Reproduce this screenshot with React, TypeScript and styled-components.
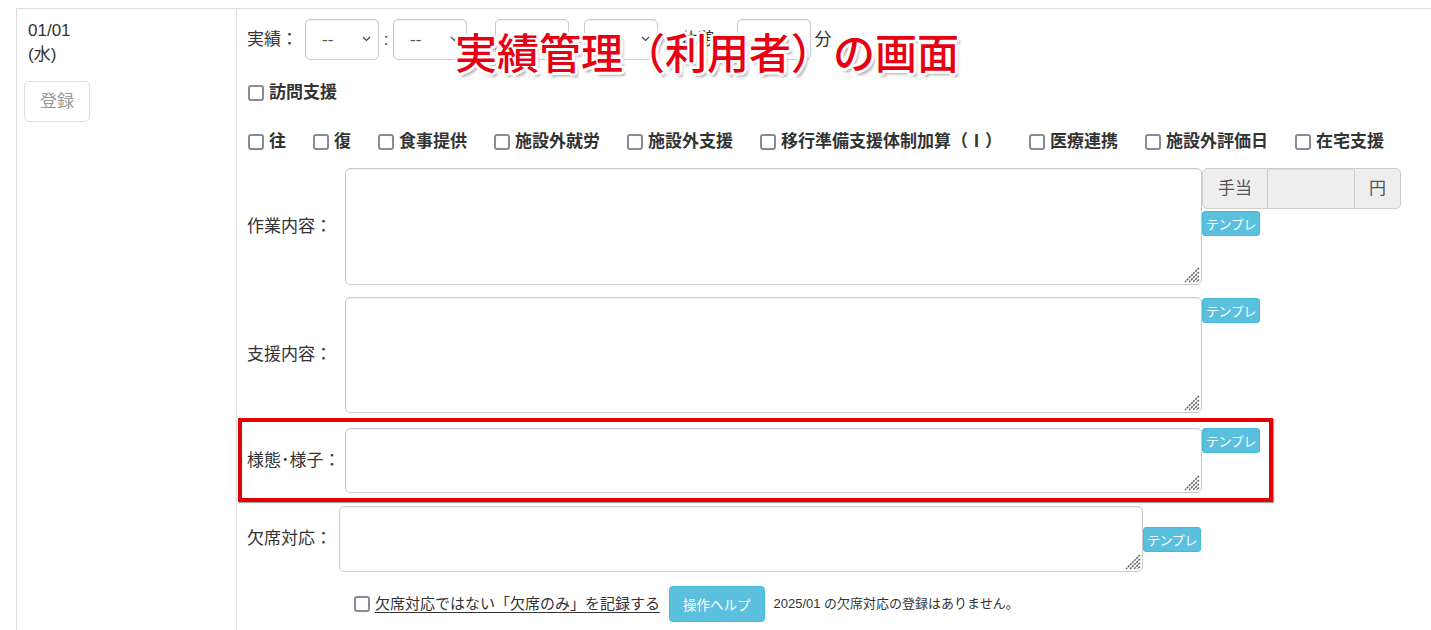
import React from "react";
import styled, { createGlobalStyle } from "styled-components";

const GlobalStyle = createGlobalStyle`
  html, body {
    margin: 0;
    padding: 0;
    overflow: hidden;
    background: #fff;
  }
  body {
    font-family: "Liberation Sans", "Noto Sans CJK JP", sans-serif;
    font-size: 17px;
    line-height: 24px;
    color: #333;
  }
`;

const Page = styled.div`
  position: relative;
  padding: 8px 0 0 16px;
  height: 640px;
`;

const Table = styled.div`
  display: flex;
  width: 1440px;
  min-height: 660px;
  border-top: 1px solid #ddd;
  border-left: 1px solid #ddd;
`;

const DateCell = styled.div`
  box-sizing: border-box;
  width: 220px;
  flex: 0 0 auto;
  padding: 10px 10px 10px 7px;
  border-right: 1px solid #ddd;
`;

const DateText = styled.div`
  padding-left: 4px;
`;

const RegisterButton = styled.button`
  display: block;
  margin-top: 14px;
  width: 66px;
  height: 41px;
  padding: 0;
  border: 1px solid #ddd;
  border-radius: 5px;
  background: #fff;
  color: #999;
  font: inherit;
`;

const FormCell = styled.div`
  flex: 1;
  padding: 10px;
`;

const TimeRow = styled.div`
  display: flex;
  align-items: center;
  height: 41px;
`;

const SelectWrap = styled.span`
  position: relative;
  display: inline-block;
  flex: 0 0 auto;

  svg {
    position: absolute;
    right: 8px;
    top: 17px;
    pointer-events: none;
  }
`;

const Select = styled.select`
  box-sizing: border-box;
  display: block;
  width: 74px;
  height: 41px;
  padding: 0 6px 0 16px;
  border: 1px solid #ccc;
  border-radius: 5px;
  background: #fff;
  color: #555;
  font: inherit;
  appearance: none;
  box-shadow: inset 0 1px 1px rgba(0, 0, 0, 0.075);
`;

const Sep = styled.span<{ w: number; align?: "left" | "center" }>`
  width: ${({ w }) => w}px;
  text-align: ${({ align }) => align ?? "center"};
  flex: 0 0 auto;
`;

const CheckRow = styled.div<{ top: number }>`
  display: flex;
  align-items: center;
  margin-top: ${({ top }) => top}px;
  height: 24px;
`;

const CheckItem = styled.label`
  display: inline-flex;
  align-items: center;
  gap: 5px;
  margin-right: 26px;
  font-weight: 700;
  white-space: nowrap;
`;

const Box = styled.input.attrs({ type: "checkbox" })`
  appearance: none;
  box-sizing: border-box;
  width: 16px;
  height: 16px;
  margin: 0 0 0 1px;
  border: 2px solid #8a8a96;
  border-radius: 3px;
  background: #fff;
  flex: 0 0 auto;
`;

const FieldRow = styled.div<{ label: number; area: number; top: number; framed?: boolean }>`
  position: relative;
  display: grid;
  grid-template-columns: ${({ label }) => label}px ${({ area }) => area}px auto;
  align-items: center;
  width: max-content;
  margin-top: ${({ top }) => top}px;

  ${({ framed }) =>
    framed &&
    `
    &::after {
      content: "";
      position: absolute;
      top: -10px;
      left: -9px;
      right: -13px;
      bottom: -9px;
      border: 4px solid #e30000;
      box-shadow: 1px 1px 1px rgba(0, 0, 0, 0.35);
      pointer-events: none;
    }
  `}
`;

const FieldLabel = styled.span`
  white-space: nowrap;
`;

const AreaWrap = styled.div`
  position: relative;

  svg {
    position: absolute;
    right: 2px;
    bottom: 2px;
    pointer-events: none;
  }
`;

const TextArea = styled.textarea<{ h: number }>`
  box-sizing: border-box;
  display: block;
  width: 100%;
  height: ${({ h }) => h}px;
  margin: 0;
  padding: 6px 12px;
  border: 1px solid #ccc;
  border-radius: 5px;
  box-shadow: inset 0 1px 1px rgba(0, 0, 0, 0.075);
  font: inherit;
  resize: none;
`;

const Side = styled.div<{ place: "start" | "center"; shift?: number }>`
  align-self: ${({ place }) => place};
  display: flex;
  flex-direction: column;
  align-items: flex-start;
  gap: 2px;
  margin-top: ${({ shift }) => shift ?? 0}px;
`;

const InputGroup = styled.div`
  display: flex;
  height: 41px;
`;

const Addon = styled.span<{ edge: "left" | "right" }>`
  box-sizing: border-box;
  display: flex;
  align-items: center;
  padding: 0 ${({ edge }) => (edge === "left" ? 15 : 14)}px;
  background: #eee;
  border: 1px solid #ccc;
  color: #555;
  border-radius: ${({ edge }) => (edge === "left" ? "5px 0 0 5px" : "0 5px 5px 0")};
`;

const Amount = styled.input`
  box-sizing: border-box;
  width: 86px;
  height: 41px;
  margin: 0;
  border: 1px solid #ccc;
  border-left: none;
  border-right: none;
  background: #eee;
  box-shadow: inset 0 1px 1px rgba(0, 0, 0, 0.075);
`;

const InfoButton = styled.button<{ size: "xs" | "sm" }>`
  box-sizing: border-box;
  height: ${({ size }) => (size === "xs" ? 25 : 36)}px;
  padding: 0 ${({ size }) => (size === "xs" ? 3 : 13)}px;
  background: #5bc0de;
  border: 1px solid #46b8da;
  border-radius: ${({ size }) => (size === "xs" ? 3 : 4)}px;
  color: #fff;
  font-family: "Liberation Sans", "Noto Sans CJK JP", sans-serif;
  font-size: ${({ size }) => (size === "xs" ? 13 : 13.5)}px;
  letter-spacing: ${({ size }) => (size === "xs" ? -0.4 : 0)}px;
  white-space: nowrap;
`;

const AbsenceRow = styled.div`
  display: flex;
  align-items: center;
  height: 36px;
  margin-top: 14px;
  padding-left: 106px;
`;

const AbsenceLabel = styled.label`
  display: inline-flex;
  align-items: center;
  gap: 5px;
  margin-right: 9px;
  font-size: 15px;
  text-decoration: underline;
  text-underline-offset: 3px;
`;

const Note = styled.span`
  margin-left: 9px;
  font-size: 13px;
`;

const Caption = styled.div`
  position: absolute;
  top: 30px;
  left: 455px;
  font-family: "Noto Sans CJK JP", sans-serif;
  font-size: 42px;
  font-weight: 500;
  line-height: 1;
  color: #e60012;
  white-space: nowrap;
  text-shadow: 3px 0 0 #fff, -3px 0 0 #fff, 0 3px 0 #fff, 0 -3px 0 #fff,
    2px 2px 0 #fff, -2px -2px 0 #fff, 2px -2px 0 #fff, -2px 2px 0 #fff,
    3px 4px 3px rgba(0, 0, 0, 0.35);
`;

const services = [
  "往",
  "復",
  "食事提供",
  "施設外就労",
  "施設外支援",
  "移行準備支援体制加算（Ⅰ）",
  "医療連携",
  "施設外評価日",
  "在宅支援",
];

const TimeSelect = () => (
  <SelectWrap>
    <Select defaultValue="">
      <option value="">--</option>
    </Select>
    <svg width="9" height="6" viewBox="0 0 9 6">
      <path d="M1 1l3.5 3.5L8 1" fill="none" stroke="#444" strokeWidth="1.2" />
    </svg>
  </SelectWrap>
);

const Grip = () => (
  <svg width="16" height="16" viewBox="0 0 16 16">
    <g stroke="#666" strokeWidth="1.5" strokeDasharray="2.2 0.8">
      <path d="M15 1L1 15" />
      <path d="M15 5L5 15" />
      <path d="M15 9L9 15" />
      <path d="M15 12.5L12.5 15" />
    </g>
  </svg>
);

const Area = ({ h }: { h: number }) => (
  <AreaWrap>
    <TextArea h={h} />
    <Grip />
  </AreaWrap>
);

const Template = () => <InfoButton size="xs">テンプレ</InfoButton>;

export default function App() {
  return (
    <Page>
      <GlobalStyle />
      <Table>
        <DateCell>
          <DateText>01/01</DateText>
          <DateText>(水)</DateText>
          <RegisterButton>登録</RegisterButton>
        </DateCell>

        <FormCell>
          <TimeRow>
            <Sep w={58} align="left">
              実績：
            </Sep>
            <TimeSelect />
            <Sep w={14}>:</Sep>
            <TimeSelect />
            <Sep w={28}>〜</Sep>
            <TimeSelect />
            <Sep w={15}>:</Sep>
            <TimeSelect />
            <Sep w={79}>休憩</Sep>
            <TimeSelect />
            <Sep w={24}>分</Sep>
          </TimeRow>

          <CheckRow top={21}>
            <CheckItem>
              <Box />
              訪問支援
            </CheckItem>
          </CheckRow>

          <CheckRow top={25}>
            {services.map((s) => (
              <CheckItem key={s}>
                <Box />
                {s}
              </CheckItem>
            ))}
          </CheckRow>

          <FieldRow label={98} area={857} top={14}>
            <FieldLabel>作業内容：</FieldLabel>
            <Area h={117} />
            <Side place="start">
              <InputGroup>
                <Addon edge="left">手当</Addon>
                <Amount readOnly />
                <Addon edge="right">円</Addon>
              </InputGroup>
              <Template />
            </Side>
          </FieldRow>

          <FieldRow label={98} area={857} top={12}>
            <FieldLabel>支援内容：</FieldLabel>
            <Area h={116} />
            <Side place="start" shift={1}>
              <Template />
            </Side>
          </FieldRow>

          <FieldRow label={98} area={857} top={15} framed>
            <FieldLabel>様態･様子：</FieldLabel>
            <Area h={65} />
            <Side place="start" shift={0}>
              <Template />
            </Side>
          </FieldRow>

          <FieldRow label={92} area={804} top={13}>
            <FieldLabel>欠席対応：</FieldLabel>
            <Area h={66} />
            <Side place="center">
              <Template />
            </Side>
          </FieldRow>

          <AbsenceRow>
            <AbsenceLabel>
              <Box />
              欠席対応ではない「欠席のみ」を記録する
            </AbsenceLabel>
            <InfoButton size="sm">操作ヘルプ</InfoButton>
            <Note>2025/01 の欠席対応の登録はありません。</Note>
          </AbsenceRow>
        </FormCell>
      </Table>
      <Caption>実績管理（利用者）の画面</Caption>
    </Page>
  );
}
